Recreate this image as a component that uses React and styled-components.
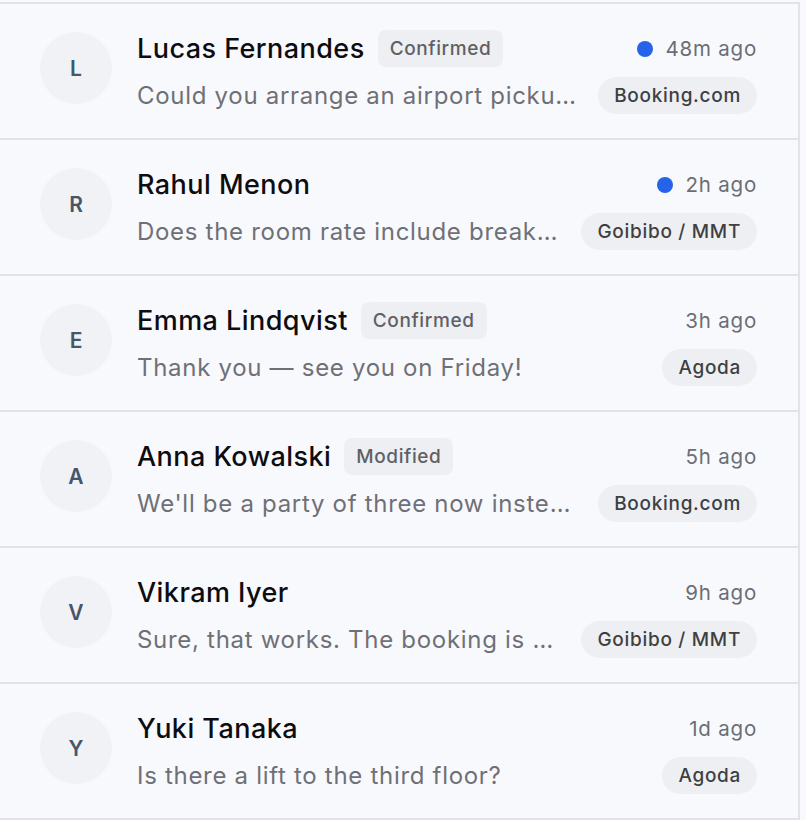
import React from "react";
import styled, { createGlobalStyle } from "styled-components";

const Global = createGlobalStyle`
  html, body { margin: 0; padding: 0; background: #f8f9fd; }
  body { font-family: Inter, "Noto Sans", "Liberation Sans", sans-serif; -webkit-font-smoothing: antialiased; }
`;

const List = styled.div`
  width: 798px;
  margin-top: 2px;
  border-top: 2px solid #e2e3e8;
  border-right: 2px solid #e2e3e8;
  background: #f8f9fd;
`;

const Row = styled.div`
  display: flex;
  align-items: center;
  gap: 25px;
  height: 134px;
  padding: 0 41px 0 40px;
  border-bottom: 2px solid #e2e3e8;
  box-sizing: content-box;
`;

const Avatar = styled.div`
  flex: none;
  width: 72px;
  height: 72px;
  border-radius: 50%;
  background: #f0f2f6;
  color: #475569;
  font-size: 21px;
  font-weight: 600;
  display: flex;
  align-items: center;
  justify-content: center;
  margin-top: -6px;
`;

const Body = styled.div`
  flex: 1;
  min-width: 0;
  display: flex;
  flex-direction: column;
  gap: 10px;
  margin-top: 2px;
`;

const Line = styled.div`
  display: flex;
  align-items: center;
  gap: 13px;
  height: 37px;
`;

const Name = styled.span`
  font-size: 27px;
  font-weight: 500;
  letter-spacing: 0.45px;
  color: #0d0d10;
  white-space: nowrap;
`;

const Status = styled.span`
  font-size: 19px;
  font-weight: 500;
  letter-spacing: 0.6px;
  color: #5f6065;
  background: #eeeff2;
  border-radius: 8px;
  padding: 0 12px;
  height: 37px;
  display: inline-flex;
  align-items: center;
`;

const Time = styled.span`
  margin-left: auto;
  display: inline-flex;
  align-items: center;
  gap: 12px;
  font-size: 20.5px;
  letter-spacing: 0.8px;
  color: #6b6e75;
  white-space: nowrap;
`;

const Dot = styled.span`
  width: 16px;
  height: 16px;
  border-radius: 50%;
  background: #2563eb;
`;

const Preview = styled.span`
  flex: 1;
  min-width: 0;
  font-size: 24px;
  letter-spacing: 0.7px;
  color: #6f7076;
  white-space: nowrap;
  overflow: hidden;
  text-overflow: ellipsis;
`;

const Source = styled.span`
  flex: none;
  font-size: 19px;
  font-weight: 500;
  letter-spacing: 0.7px;
  color: #3e3f43;
  background: #eeeff2;
  border-radius: 999px;
  padding: 0 16px;
  height: 37px;
  display: inline-flex;
  align-items: center;
  margin-left: 9px;
`;

const items = [
  { n: "Lucas Fernandes", s: "Confirmed", t: "48m ago", u: true, p: "Could you arrange an airport pickup from the terminal?", src: "Booking.com" },
  { n: "Rahul Menon", t: "2h ago", u: true, p: "Does the room rate include breakfast for two?", src: "Goibibo / MMT" },
  { n: "Emma Lindqvist", s: "Confirmed", t: "3h ago", p: "Thank you — see you on Friday!", src: "Agoda" },
  { n: "Anna Kowalski", s: "Modified", t: "5h ago", p: "We'll be a party of three now instead of two.", src: "Booking.com" },
  { n: "Vikram Iyer", t: "9h ago", p: "Sure, that works. The booking is under my name.", src: "Goibibo / MMT" },
  { n: "Yuki Tanaka", t: "1d ago", p: "Is there a lift to the third floor?", src: "Agoda" },
];

export default function App() {
  return (
    <>
      <Global />
      <List>
        {items.map((it) => (
          <Row key={it.n}>
            <Avatar>{it.n[0]}</Avatar>
            <Body>
              <Line>
                <Name>{it.n}</Name>
                {it.s && <Status>{it.s}</Status>}
                <Time>
                  {it.u && <Dot />}
                  {it.t}
                </Time>
              </Line>
              <Line>
                <Preview>{it.p}</Preview>
                <Source>{it.src}</Source>
              </Line>
            </Body>
          </Row>
        ))}
      </List>
    </>
  );
}
